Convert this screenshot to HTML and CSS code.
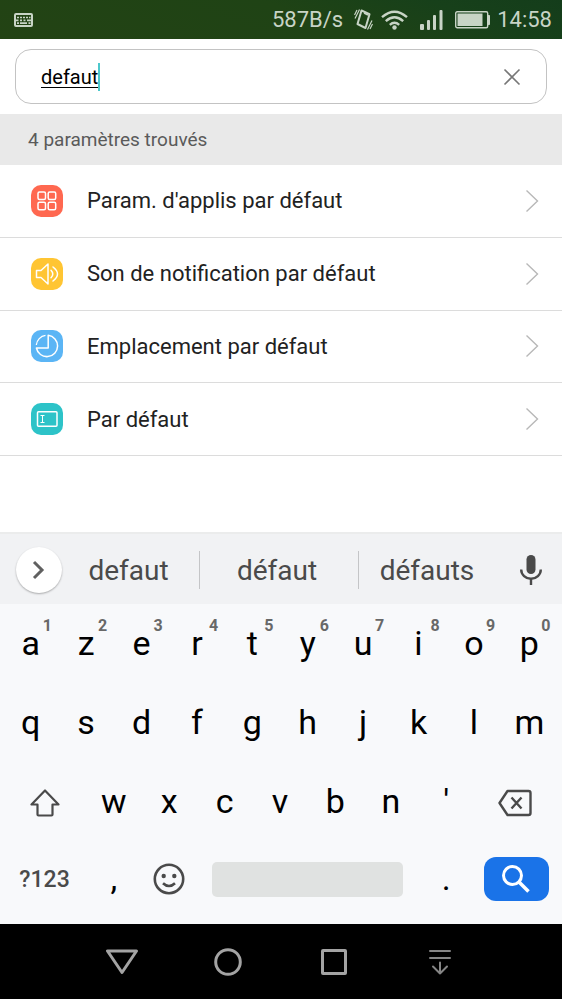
FILE: index.html
```html
<!DOCTYPE html>
<html lang="fr">
<head>
<meta charset="utf-8">
<meta name="viewport" content="width=device-width, initial-scale=1">
<title>Paramètres</title>
<link rel="stylesheet" href="styles.css">
</head>
<body>
<header class="status">
  <svg class="status-kbd" width="19" height="14" viewBox="0 0 19 14" aria-hidden="true">
    <rect x="1" y="1" width="17" height="12" rx="1" fill="none" stroke="currentColor" stroke-width="2"/>
    <path d="M3 4.500h2M6 4.500h2M9 4.500h2M12 4.500h2M15 4.500h1.500M2 7.300h2.500M6 7.300h2M9.500 7.300h2M13 7.300h4M3 10.200h2M6 10.200h7M14.500 10.200h2" stroke="currentColor" stroke-width="1.700"/>
  </svg>
  <span class="speed">587B/s</span>
  <svg class="vibrate" width="19" height="21" viewBox="0 0 19 21" fill="none" stroke="currentColor" aria-hidden="true">
    <path d="M7.500 1.500L15.500 5.200L11.500 19L3.500 15z" stroke-width="2" stroke-linejoin="round"/>
    <path d="M10 4L14 6" stroke-width="1.400"/>
    <path d="M5.500 .5L1 9.500M3 1L.5 6M18 11.500L13.500 20.500M18.500 15L16 20" stroke-width="1.200"/>
  </svg>
  <svg class="wifi" width="27" height="20" viewBox="0 0 27 20" fill="none" stroke="currentColor" stroke-width="2.400" aria-hidden="true">
    <path d="M1 7.200Q13.500-3.800 26 7.200M4.800 11.200Q13.500 3.500 22.200 11.200M8.800 14.800Q13.500 10.800 18.200 14.800"/>
    <circle cx="13.500" cy="17.500" r="2.200" fill="currentColor" stroke="none"/>
  </svg>
  <svg class="signal" width="23" height="20" viewBox="0 0 23 20" fill="currentColor" aria-hidden="true">
    <rect x="0" y="14" width="4" height="6" rx="1"/><rect x="7" y="10" width="3" height="10" rx="1"/><rect x="13" y="5" width="3" height="15" rx="1"/><rect x="19.500" y="0" width="3" height="20" rx="1"/>
  </svg>
  <svg class="battery" width="35" height="18" viewBox="0 0 35 18" aria-hidden="true">
    <rect x=".7" y=".7" width="32" height="16" rx="1.500" fill="none" stroke="currentColor" stroke-width="1.400"/>
    <rect x="2.500" y="2.500" width="25" height="12.500" fill="currentColor"/>
    <path d="M33 4.500h1.500v9H33z" fill="currentColor" stroke="currentColor"/>
  </svg>
  <time class="clock">14:58</time>
</header>

<main class="main">
  <form class="search" onsubmit="return false">
    <div class="search-box">
      <input class="search-input" type="text" value="defaut" aria-label="Rechercher" spellcheck="false">
      <span class="caret"></span>
      <button class="clear" type="button" aria-label="Effacer">
        <svg width="18" height="18" viewBox="0 0 18 18" fill="none" stroke="currentColor" stroke-width="1.600"><path d="M1.500 1.500l15 15M16.500 1.500l-15 15"/></svg>
      </button>
    </div>
  </form>
  <h1 class="count">4 paramètres trouvés</h1>
  <ul class="results">
    <li><a class="result" href="#applis">
      <svg class="badge red" viewBox="0 0 32 32" fill="none" stroke="#fff" stroke-width="1.500"><rect x="7" y="7" width="7.500" height="7.500" rx="1.500"/><rect x="17.200" y="7" width="7.500" height="7.500" rx="1.500"/><rect x="7" y="17.200" width="7.500" height="7.500" rx="1.500"/><rect x="17.200" y="17.200" width="7.500" height="7.500" rx="1.500"/></svg>
      <span class="label">Param. d'applis par défaut</span>
      <svg class="chevron" viewBox="0 0 14 24"><path d="M1.500 1.500L12.500 12L1.500 22.500"/></svg>
    </a></li>
    <li><a class="result" href="#son">
      <svg class="badge yellow" viewBox="0 0 32 32" fill="none" stroke="#fff" stroke-width="1.500"><path d="M5.500 12.500h4.500l7-6.500v20l-7-6.500H5.500zM20 12.200q3.600 3.800 0 7.600M22 9q9 7 0 14" stroke-linejoin="round" stroke-linecap="round"/></svg>
      <span class="label">Son de notification par défaut</span>
      <svg class="chevron" viewBox="0 0 14 24"><path d="M1.500 1.500L12.500 12L1.500 22.500"/></svg>
    </a></li>
    <li><a class="result" href="#emplacement">
      <svg class="badge blue" viewBox="0 0 32 32" fill="none" stroke="#fff" stroke-width="1.500"><path d="M17.200 5.300V18H5.400A10.700 10.700 0 1 0 17.200 5.300z" stroke-linejoin="round"/><path d="M14.500 5.400A10.700 10.700 0 0 0 5.300 15" stroke-width="1.300"/></svg>
      <span class="label">Emplacement par défaut</span>
      <svg class="chevron" viewBox="0 0 14 24"><path d="M1.500 1.500L12.500 12L1.500 22.500"/></svg>
    </a></li>
    <li><a class="result" href="#saisie">
      <svg class="badge teal" viewBox="0 0 32 32" fill="none" stroke="#fff" stroke-width="1.500"><rect x="6.500" y="8.700" width="19.500" height="14.500" rx="1"/><path d="M9.500 12.500h4M11.500 12.500v7M9.500 19.500h4" stroke-width="1"/></svg>
      <span class="label">Par défaut</span>
      <svg class="chevron" viewBox="0 0 14 24"><path d="M1.500 1.500L12.500 12L1.500 22.500"/></svg>
    </a></li>
  </ul>
</main>

<section class="keyboard" aria-label="Clavier">
  <div class="suggestions">
    <button class="expand" type="button" aria-label="Plus"><svg width="14" height="20" viewBox="0 0 14 20" fill="none" stroke="#606060" stroke-width="3"><path d="M2 2l8 8-8 8"/></svg></button>
    <button class="word first" type="button">defaut</button>
    <button class="word" type="button">défaut</button>
    <button class="word" type="button">défauts</button>
    <button class="mic" type="button" aria-label="Saisie vocale"><svg width="22" height="30" viewBox="0 0 22 30"><rect x="6.500" y="0" width="9" height="19" rx="4.500" fill="#4a4a4a"/><path d="M1.200 14.500a9.800 9.300 0 0 0 19.600 0M11 24v6" fill="none" stroke="#4a4a4a" stroke-width="2.400"/></svg></button>
  </div>
  <div class="keys">
    <div class="row">
      <button class="key">a<span class="hint">1</span></button><button class="key">z<span class="hint">2</span></button><button class="key">e<span class="hint">3</span></button><button class="key">r<span class="hint">4</span></button><button class="key">t<span class="hint">5</span></button><button class="key">y<span class="hint">6</span></button><button class="key">u<span class="hint">7</span></button><button class="key">i<span class="hint">8</span></button><button class="key">o<span class="hint">9</span></button><button class="key">p<span class="hint">0</span></button>
    </div>
    <div class="row">
      <button class="key">q</button><button class="key">s</button><button class="key">d</button><button class="key">f</button><button class="key">g</button><button class="key">h</button><button class="key">j</button><button class="key">k</button><button class="key">l</button><button class="key">m</button>
    </div>
    <div class="row shifted">
      <button class="key icon" aria-label="Majuscule"><svg width="30" height="28" viewBox="0 0 30 28" fill="none" stroke="#4a4a4a" stroke-width="2.200" stroke-linejoin="round"><path d="M15 1.500L1.500 15.500H7.500V25.500Q7.500 26.500 8.500 26.500H21.500Q22.500 26.500 22.500 25.500V15.500H28.500z"/></svg></button>
      <button class="key">w</button><button class="key">x</button><button class="key">c</button><button class="key">v</button><button class="key">b</button><button class="key">n</button><button class="key">'</button>
      <button class="key icon" aria-label="Supprimer"><svg width="34" height="28" viewBox="0 0 34 28" fill="none" stroke="#4a4a4a" stroke-width="2.400" stroke-linejoin="round"><path d="M9.500 2H30.500Q32.500 2 32.500 4V24Q32.500 26 30.500 26H9.500L1.500 14z"/><path d="M13.500 8.500l10 11M23.500 8.500l-10 11"/></svg></button>
    </div>
    <div class="row bottom">
      <button class="key symbols">?123</button>
      <button class="key">,</button>
      <button class="key icon" aria-label="Émojis"><svg width="32" height="32" viewBox="0 0 32 32" fill="none" stroke="#4a4a4a" stroke-width="2.600"><circle cx="16" cy="16" r="14.200"/><path d="M10 20.200q6 5.600 12 0"/><circle cx="10.700" cy="13" r="2.200" fill="#4a4a4a" stroke="none"/><circle cx="21.300" cy="13" r="2.200" fill="#4a4a4a" stroke="none"/></svg></button>
      <button class="space" aria-label="Espace"></button>
      <button class="key">.</button>
      <button class="go" aria-label="Rechercher"><svg width="28" height="28" viewBox="0 0 28 28" fill="none" stroke="#fff" stroke-width="3"><circle cx="10.500" cy="10.500" r="9"/><path d="M17 17l9.500 9.500" stroke-width="3.600"/></svg></button>
    </div>
  </div>
</section>

<nav class="navbar" aria-label="Navigation">
  <button class="nav" aria-label="Retour"><svg width="32" height="26" viewBox="0 0 32 26"><path d="M1.500 2h29L16 23.500z"/></svg></button>
  <button class="nav" aria-label="Accueil"><svg width="28" height="28" viewBox="0 0 28 28"><circle cx="14" cy="14" r="12.300"/></svg></button>
  <button class="nav" aria-label="Récents"><svg width="26" height="26" viewBox="0 0 26 26"><rect x="1.500" y="1.500" width="23" height="23" rx=".5"/></svg></button>
  <button class="nav dim" aria-label="Notifications"><svg width="22" height="26" viewBox="0 0 22 26" stroke-linecap="round"><path d="M1 2h20M1 9h20M11 13.500v11M4 17.500l7 7 7-7"/></svg></button>
</nav>
</body>
</html>
```
FILE: styles.css
```css
* {
  box-sizing: border-box;
}

body {
  margin: 0;
  min-height: 100vh;
  display: flex;
  flex-direction: column;
  background: #fff;
  font-family: Roboto, "Liberation Sans", sans-serif;
}

button {
  padding: 0;
  border: 0;
  background: none;
  color: inherit;
  font: inherit;
}

svg {
  display: block;
  flex: none;
}

.status {
  display: flex;
  align-items: center;
  height: 39px;
  padding: 0 10px 0 14px;
  background: linear-gradient(20deg, #234314 0%, #1f4315 55%, #17401a 80%, #143d1b 100%);
  color: #c8d4c6;
  font-size: 22px;
}

.speed {
  margin-left: auto;
}

.vibrate {
  margin-left: 11px;
}

.wifi {
  margin-left: 8px;
}

.signal {
  margin-left: 12px;
}

.battery {
  margin-left: 12px;
}

.clock {
  margin-left: 7px;
}

.main {
  flex: 1;
}

.search {
  padding: 10px 15px;
}

.search-box {
  display: flex;
  align-items: center;
  height: 55px;
  padding: 0 25px;
  border: 1px solid #c3c3c3;
  border-radius: 16px;
}

.search-input {
  field-sizing: content;
  min-width: 0;
  padding: 0;
  border: 0;
  outline: 0;
  background: none;
  color: #000;
  font: inherit;
  font-size: 20px;
  text-decoration: underline 1px;
  text-underline-offset: 3px;
}

.caret {
  width: 2px;
  height: 28px;
  background: #4cc8cc;
}

.clear {
  margin-left: auto;
  color: #777;
}

.count {
  margin: 0;
  padding: 0 28px;
  background: #e9e9e9;
  color: #5a5a5a;
  font-size: 19px;
  font-weight: 400;
  line-height: 51px;
}

.results {
  display: grid;
  grid-template-rows: repeat(4, 1fr);
  height: 291px;
  margin: 0;
  padding: 0;
  list-style: none;
}

.result {
  display: flex;
  align-items: center;
  height: 100%;
  padding: 0 23px 0 31px;
  border-bottom: 1px solid #dcdcdc;
  color: #222;
  font-size: 22px;
  text-decoration: none;
}

.badge {
  width: 32px;
  height: 32px;
  border-radius: 10px;
}

.red {
  background: #ff6850;
}

.yellow {
  background: #ffc533;
}

.blue {
  background: #5bb5f5;
}

.teal {
  background: #2dc3c8;
}

.label {
  flex: 1;
  margin-left: 24px;
}

.chevron {
  width: 14px;
  height: 24px;
  fill: none;
  stroke: #b8b8b8;
  stroke-width: 1.4;
}

.keyboard {
  background: #f8f9fb;
  color: #000;
}

.suggestions {
  display: grid;
  grid-template-columns: 46px 137fr 159fr 141fr 63px;
  align-items: center;
  height: 72px;
  padding: 2px 0 0 16px;
  border-top: 2px solid #ebecec;
  background: #f1f2f4;
}

.expand {
  display: grid;
  place-items: center;
  width: 46px;
  height: 46px;
  border-radius: 50%;
  background: #fff;
  box-shadow: 0 1px 2px rgba(0, 0, 0, 0.3);
}

.word {
  height: 38px;
  padding-right: 4px;
  border-left: 1px solid #c4c5c7;
  color: #4a4a4a;
  font-size: 28px;
}

.word.first {
  border-left: 0;
}

.mic {
  display: grid;
  place-items: center;
}

.keys {
  padding: 0 5px 7px 3px;
}

.row {
  display: grid;
  grid-template-columns: repeat(10, 1fr);
  height: 79px;
}

.row.shifted {
  grid-template-columns: 3fr repeat(7, 2fr) 3fr;
}

.row.bottom {
  grid-template-columns: 3fr 2fr 2fr 8fr 2fr 3fr;
  align-items: center;
  height: 76px;
}

.key {
  position: relative;
  display: flex;
  align-items: center;
  justify-content: center;
  min-width: 0;
  padding-bottom: 2px;
  font-size: 34px;
}

.key.icon {
  padding: 2px 0 0;
}

.row.bottom .icon {
  padding: 0;
}

.hint {
  position: absolute;
  top: 12px;
  left: calc(50% + 12px);
  color: #686868;
  font-size: 16px;
  font-weight: 700;
  line-height: 19px;
}

.key.symbols {
  padding: 0;
  color: #4a4a4a;
  font-size: 23px;
  font-weight: 500;
}

.space {
  height: 35px;
  margin: 0 16px 0 15px;
  border-radius: 5px;
  background: #e0e2e1;
}

.go {
  display: grid;
  place-items: center;
  height: 44px;
  margin: 0 8px 0 10px;
  border-radius: 12px;
  background: #1a73e8;
}

.navbar {
  display: flex;
  justify-content: center;
  height: 75px;
  background: #000;
}

.nav {
  display: grid;
  place-items: center;
  width: 106px;
  color: #a3a3a3;
}

.nav svg {
  fill: none;
  stroke: currentColor;
  stroke-width: 3;
  stroke-linejoin: round;
}

.nav.dim {
  color: #858585;
}

.nav.dim svg {
  stroke-width: 2;
}
```
